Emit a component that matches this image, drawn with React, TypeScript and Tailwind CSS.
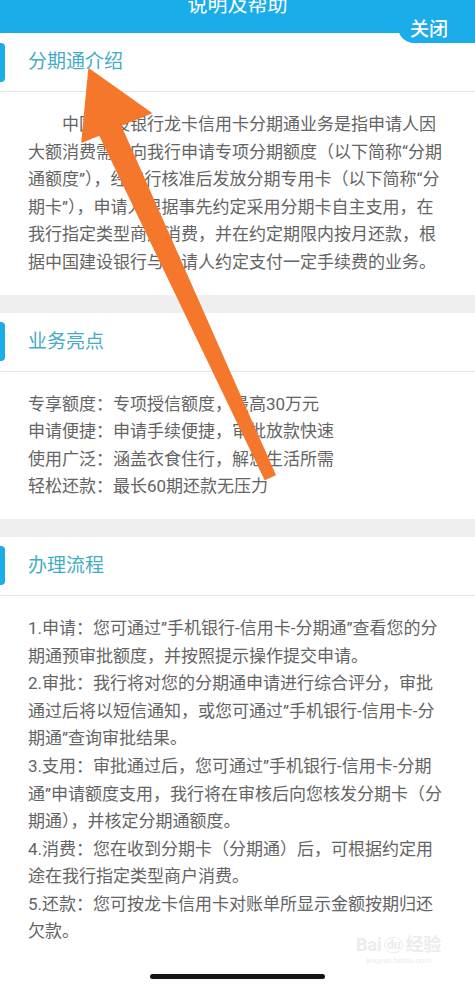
import React from "react";

const intro = [
  "中国建设银行龙卡信用卡分期通业务是指申请人因",
  "大额消费需求向我行申请专项分期额度（以下简称“分期",
  "通额度”），经我行核准后发放分期专用卡（以下简称“分",
  "期卡”），申请人根据事先约定采用分期卡自主支用，在",
  "我行指定类型商户消费，并在约定期限内按月还款，根",
  "据中国建设银行与申请人约定支付一定手续费的业务。",
];

const highlights = [
  "专享额度：专项授信额度，最高30万元",
  "申请便捷：申请手续便捷，审批放款快速",
  "使用广泛：涵盖衣食住行，解您生活所需",
  "轻松还款：最长60期还款无压力",
];

const process = [
  "1.申请：您可通过”手机银行-信用卡-分期通”查看您的分",
  "期通预审批额度，并按照提示操作提交申请。",
  "2.审批：我行将对您的分期通申请进行综合评分，审批",
  "通过后将以短信通知，或您可通过”手机银行-信用卡-分",
  "期通”查询审批结果。",
  "3.支用：审批通过后，您可通过”手机银行-信用卡-分期",
  "通”申请额度支用，我行将在审核后向您核发分期卡（分",
  "期通），并核定分期通额度。",
  "4.消费：您在收到分期卡（分期通）后，可根据约定用",
  "途在我行指定类型商户消费。",
  "5.还款：您可按龙卡信用卡对账单所显示金额按期归还",
  "欠款。",
];

function SectionHeader({ title }: { title: string }) {
  return (
    <div className="flex h-[59px] items-center border-b border-[#e3e3e3] bg-white">
      <div className="h-[39px] w-[5px] rounded-r-[4px] bg-[#1aadea]" />
      <span className="ml-[23px] text-[19px] leading-[24px] text-[#44acc6]">{title}</span>
    </div>
  );
}

function Body({ lines, indentFirst }: { lines: string[]; indentFirst?: boolean }) {
  return (
    <div className="bg-white px-[28px] pb-[18px] pt-[19px] text-[17px] leading-[27.6px] text-[#646464]">
      {lines.map((l, i) => (
        <div key={i} className={`whitespace-nowrap ${indentFirst && i === 0 ? "pl-[34px]" : ""}`}>
          {l}
        </div>
      ))}
    </div>
  );
}

export default function App() {
  return (
    <div className="relative h-[986px] w-[475px] overflow-hidden bg-white font-[Roboto,'Noto_Sans_CJK_SC',sans-serif]">
      {/* Top bar */}
      <div className="flex h-[33px] justify-center overflow-hidden bg-[#1aadea]">
        <span className="mt-[-5px] text-[20px] leading-[20px] text-white">说明及帮助</span>
      </div>

      <SectionHeader title="分期通介绍" />
      <Body lines={intro} indentFirst />
      <div className="h-[18px] bg-[#efefef]" />

      <SectionHeader title="业务亮点" />
      <Body lines={highlights} />
      <div className="h-[18px] bg-[#efefef]" />

      <SectionHeader title="办理流程" />
      <Body lines={process} />

      {/* Close tab */}
      <div className="absolute right-0 top-[16px] flex h-[27px] w-[77px] items-center rounded-bl-[16px] bg-[#1aadea] pl-[12px]">
        <span className="text-[19px] font-medium leading-[20px] text-white">关闭</span>
      </div>

      {/* Watermark */}
      <div className="absolute left-[356px] top-[934px] flex flex-col items-center text-[#ececec]">
        <div className="flex items-center gap-[2px] text-[18px] font-bold leading-[22px]">
          <span>Bai</span>
          <span className="rounded-full border border-[#ececec] px-[2px] text-[12px] leading-[14px]">du</span>
          <span>经验</span>
        </div>
        <span className="text-[8px] leading-[10px]">jingyan.baidu.com</span>
      </div>

      {/* Annotation arrow */}
      <svg className="pointer-events-none absolute left-0 top-0" width="475" height="986" viewBox="0 0 475 986">
        <polygon
          points="89,69 151,113 120.4,125.2 275,474.7 265,479.3 99.6,134.8 82,142"
          fill="#f5772c"
          stroke="#f5772c"
          strokeWidth="1.5"
          strokeLinejoin="round"
        />
      </svg>

      {/* Home indicator */}
      <div className="absolute left-[150px] top-[974px] h-[5px] w-[175px] rounded-full bg-[#151515]" />
    </div>
  );
}
